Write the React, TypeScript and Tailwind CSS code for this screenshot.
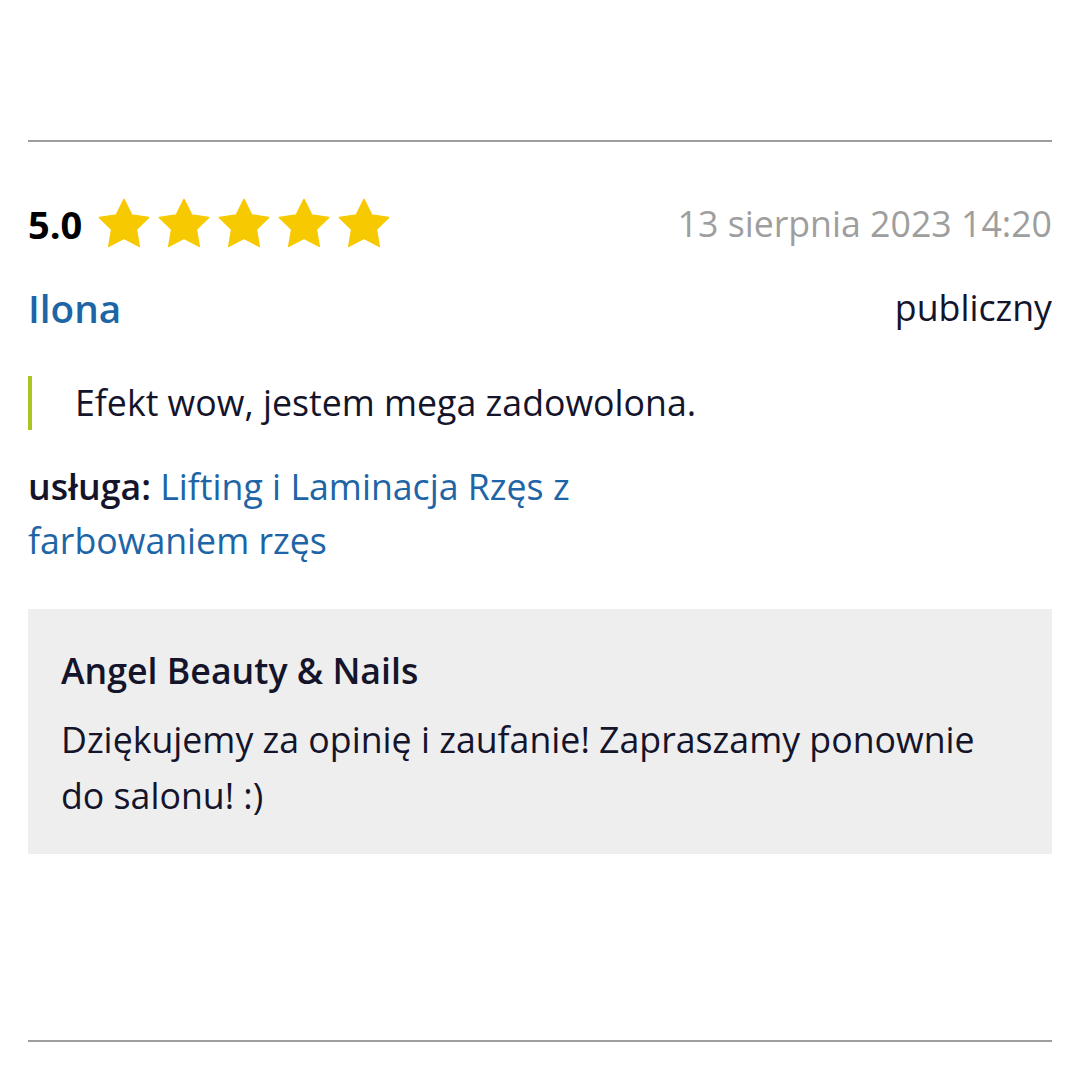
import React from "react";

const Star = () => (
  <svg width="52" height="50" viewBox="-1 -1 54 51" className="shrink-0">
    <path
      d="M26 0 L33.94 16.08 L51.68 18.66 L38.84 31.17 L41.87 48.84 L26 40.5 L10.13 48.84 L13.16 31.17 L0.32 18.66 L18.06 16.08 Z"
      fill="#f7c900"
      stroke="#f7c900"
      strokeWidth="1.5"
      strokeLinejoin="round"
    />
  </svg>
);

export default function App() {
  return (
    <div
      className="w-[1080px] h-[1080px] bg-white px-[28px] pt-[140px] text-[#14142b]"
      style={{ fontFamily: '"Open Sans", sans-serif' }}
    >
      <div className="h-[2px] bg-[#9e9e9e]" />
      <div className="flex items-center justify-between mt-[54px] h-[56px]">
        <div className="flex items-center">
          <span className="text-[38px] font-bold text-black mr-[16px]">5.0</span>
          <div className="flex gap-[8px] mt-[-3px]">
            <Star />
            <Star />
            <Star />
            <Star />
            <Star />
          </div>
        </div>
        <span className="text-[35.7px] text-[#9e9e9e]">13 sierpnia 2023 14:20</span>
      </div>
      <div className="flex items-center justify-between mt-[28px] h-[56px]">
        <span className="text-[38.7px] font-semibold text-[#1d65a6]">Ilona</span>
        <span className="text-[35.7px]">publiczny</span>
      </div>
      <div className="mt-[40px] border-l-[4px] border-[#a9c521] pl-[43px] h-[54px] flex items-center">
        <span className="text-[35.7px]">Efekt wow, jestem mega zadowolona.</span>
      </div>
      <p className="mt-[29px] text-[35.7px] leading-[54px] w-[600px]">
        <span className="font-semibold">usługa:</span>{" "}
        <span className="text-[#1d65a6]">Lifting i Laminacja Rzęs z farbowaniem rzęs</span>
      </p>
      <div className="mt-[42px] bg-[#eeeeee] px-[33px] pt-[36px] h-[245px]">
        <div className="text-[35.7px] font-semibold leading-[50px]">Angel Beauty &amp; Nails</div>
        <p className="text-[35.7px] leading-[56px] mt-[16px]">
          Dziękujemy za opinię i zaufanie! Zapraszamy ponownie do salonu! :)
        </p>
      </div>
      <div className="h-[2px] bg-[#9e9e9e] mt-[186px]" />
    </div>
  );
}
